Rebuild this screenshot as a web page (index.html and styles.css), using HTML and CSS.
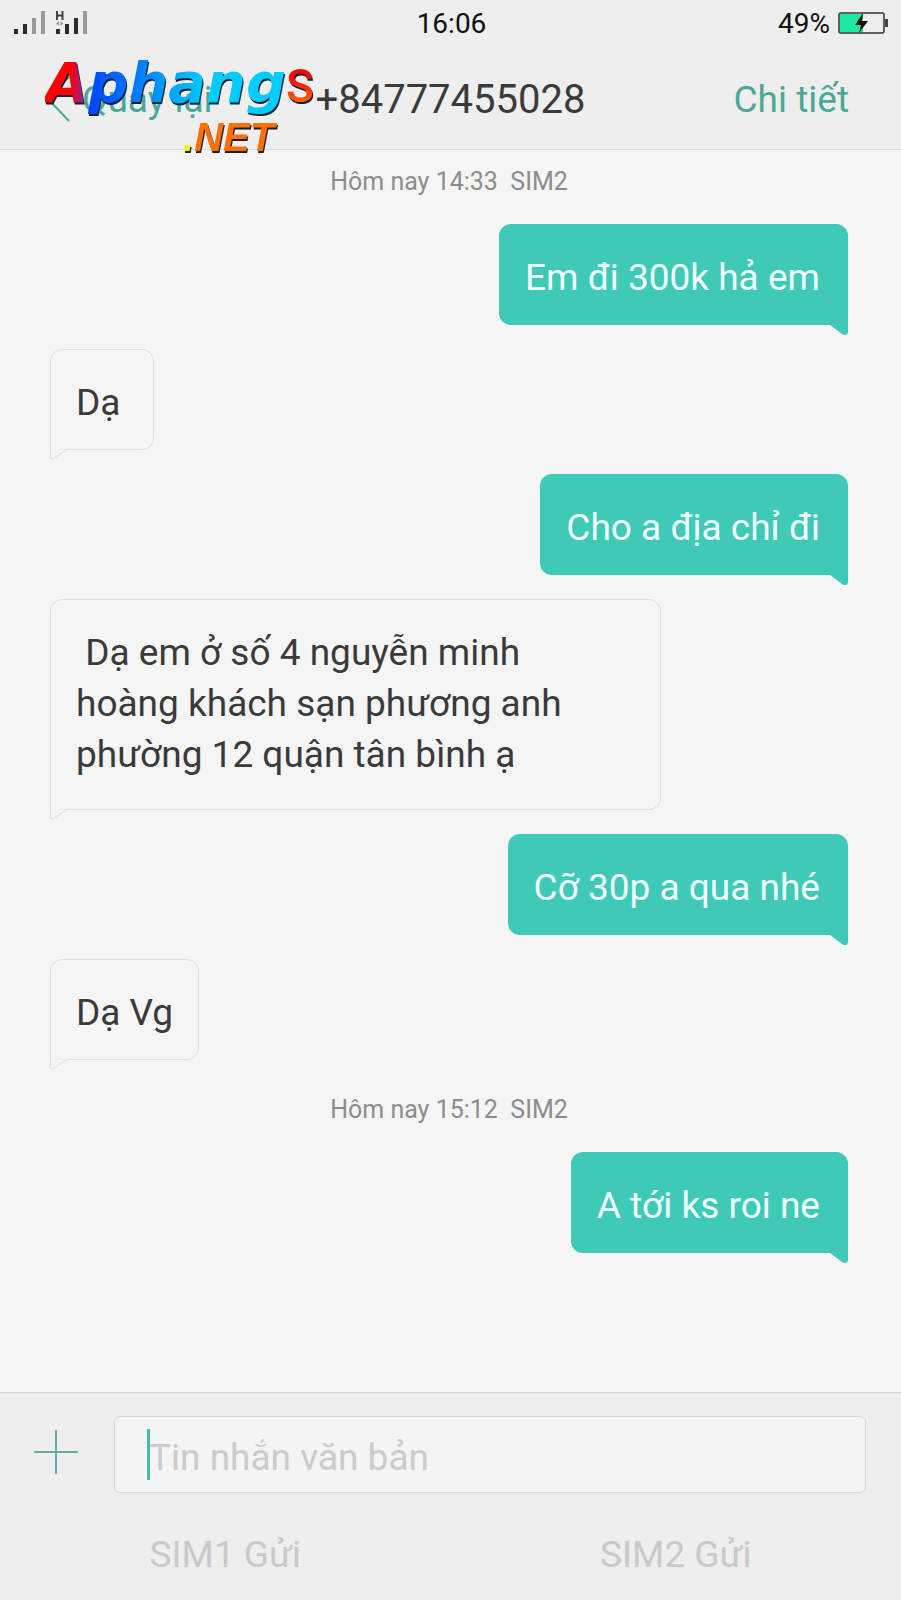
FILE: index.html
```html
<!DOCTYPE html>
<html lang="vi">
<head>
    <meta charset="UTF-8">
    <meta name="viewport" content="width=device-width, initial-scale=1.0">
    <title>+84777455028</title>
    <link rel="stylesheet" href="styles.css">
</head>
<body>
    <header class="header">
        <div class="status-bar">
            <svg class="signal" width="76" height="26" viewBox="0 0 76 26">
                <g fill="#2b2b2b">
                    <rect x="0" y="19" width="4" height="5"/>
                    <rect x="9" y="14" width="4" height="10"/>
                    <rect x="42" y="19" width="4" height="5"/>
                    <rect x="51" y="14" width="4" height="10"/>
                    <rect x="60" y="8" width="4" height="16"/>
                </g>
                <g fill="#999">
                    <rect x="18" y="8" width="4" height="16"/>
                    <rect x="27" y="1" width="4" height="23"/>
                    <rect x="69" y="1" width="4" height="23"/>
                    <path d="M45 11v5l-3-2.5zM46.500 11v5l3-2.500z"/>
                </g>
                <path d="M43 1v9M48.500 1v9M43 5.500h5.500" stroke="#444" stroke-width="2" fill="none"/>
            </svg>
            <span class="clock">16:06</span>
            <div class="battery">
                <span>49%</span>
                <svg width="51" height="22" viewBox="0 0 51 22">
                    <rect x="2" y="2" width="23" height="18" fill="#1de9a0"/>
                    <rect x="1" y="1" width="45" height="20" rx="2" fill="none" stroke="#333" stroke-width="1.500"/>
                    <rect x="47" y="7" width="3" height="8" fill="#444"/>
                    <path d="M25 1L17 13h6l-2 8 9-12h-6z" fill="#111"/>
                </svg>
            </div>
        </div>
        <nav class="nav">
            <a class="back" href="#">
                <svg width="26" height="46" viewBox="0 0 26 46">
                    <path d="M23 1L2 23l21 22" fill="none" stroke="#4aa897" stroke-width="2"/>
                </svg>
                Quay lại
            </a>
            <h1>+84777455028</h1>
            <a class="details" href="#">Chi tiết</a>
        </nav>
        <div class="logo">
            <div class="logo-name"><span class="l-a">A</span><span class="l-word">phang</span><span class="l-s">S</span></div>
            <div class="logo-net"><span class="l-dot">.</span>NET</div>
        </div>
    </header>

    <main class="chat">
        <p class="date">Hôm nay 14:33&nbsp; SIM2</p>
        <div class="bubble sent">Em đi 300k hả em</div>
        <div class="bubble received">Dạ<svg class="tail" width="18" height="11" viewBox="0 0 18 11"><path d="M.5 0V9q0 2 2 1L17 .5"/></svg></div>
        <div class="bubble sent">Cho a địa chỉ đi</div>
        <div class="bubble received long">&nbsp;Dạ em ở số 4 nguyễn minh<br>hoàng khách sạn phương anh phường 12 quận tân bình ạ<svg class="tail" width="18" height="11" viewBox="0 0 18 11"><path d="M.5 0V9q0 2 2 1L17 .5"/></svg></div>
        <div class="bubble sent">Cỡ 30p a qua nhé</div>
        <div class="bubble received">Dạ Vg<svg class="tail" width="18" height="11" viewBox="0 0 18 11"><path d="M.5 0V9q0 2 2 1L17 .5"/></svg></div>
        <p class="date">Hôm nay 15:12&nbsp; SIM2</p>
        <div class="bubble sent">A tới ks roi ne</div>
    </main>

    <form class="composer">
        <div class="compose-row">
            <button type="button" class="add" aria-label="Thêm">
                <svg width="44" height="44" viewBox="0 0 44 44">
                    <path d="M0 22h44M22 0v44" stroke="#5fae9f" stroke-width="2"/>
                </svg>
            </button>
            <div class="field">
                <input type="text" placeholder="Tin nhắn văn bản" aria-label="Tin nhắn văn bản">
                <span class="caret"></span>
            </div>
        </div>
        <div class="send-row">
            <button type="button">SIM1 Gửi</button>
            <button type="button">SIM2 Gửi</button>
        </div>
    </form>
</body>
</html>
```

FILE: styles.css
```css
* {
    box-sizing: border-box;
    margin: 0;
    padding: 0;
}

body {
    display: flex;
    flex-direction: column;
    min-height: 100vh;
    background-color: #f5f5f5;
    color: #3a3a3a;
    font-family: Roboto, sans-serif;
    font-size: 37px;
}

a {
    color: #4aa897;
    text-decoration: none;
}

button,
input {
    font: inherit;
    border: none;
    background: none;
}

/* Header */
.header {
    position: relative;
    background-color: #eee;
    border-bottom: 1px solid #dcdcdc;
}

.status-bar,
.nav {
    display: grid;
    grid-template-columns: 1fr auto 1fr;
    align-items: center;
}

.status-bar {
    height: 46px;
    padding: 0 12px 0 14px;
    font-size: 28px;
    color: #111;
}

.battery {
    display: flex;
    justify-content: flex-end;
    align-items: center;
    gap: 8px;
}

.nav {
    height: 103px;
    padding: 3px 52px 0 46px;
}

.nav h1 {
    padding-left: 6px;
    font-size: 40px;
    font-weight: 400;
}

.back {
    display: flex;
    align-items: center;
    gap: 10px;
}

.details {
    text-align: right;
}

/* Site logo laid over the header */
.logo {
    position: absolute;
    left: 45px;
    top: 50px;
    font-family: "DejaVu Sans", sans-serif;
    font-weight: 700;
    pointer-events: none;
    filter: drop-shadow(1px 2px 0 #123);
}

.logo-name {
    font-size: 56px;
    line-height: 66px;
    white-space: nowrap;
}

.logo-name span {
    background-clip: text;
    -webkit-background-clip: text;
    color: transparent;
}

.l-a,
.l-word {
    font-style: italic;
}

.l-a {
    background-image: linear-gradient(90deg, #f00 60%, #63c);
}

.l-word {
    background-image: linear-gradient(90deg, #04f, #0af 45%, #0cf 60%);
}

.l-s {
    font-family: Roboto, sans-serif;
    font-size: 46px;
    font-weight: 500;
    background-image: linear-gradient(#f00 30%, #f80);
}

.logo-net {
    padding-left: 138px;
    font-family: "Liberation Sans", sans-serif;
    font-size: 40px;
    font-style: italic;
    line-height: 36px;
    color: #ff7000;
}

.l-dot {
    color: #fe0;
}

/* Messages */
.chat {
    flex: 1;
    display: flex;
    flex-direction: column;
    gap: 24px;
    padding: 6px 53px 24px 50px;
}

.date {
    margin-top: 8px;
    font-size: 25px;
    line-height: 36px;
    text-align: center;
    color: #8c8c8c;
}

.bubble {
    position: relative;
    min-width: 104px;
    max-width: 611px;
    padding: 28px 28px 22px 26px;
    line-height: 51px;
    border-radius: 12px;
}

.sent {
    align-self: flex-end;
    background-color: #3fcab8;
    border-bottom-right-radius: 0;
    color: #f2fffc;
}

.sent::after {
    content: "";
    position: absolute;
    right: 0;
    top: 100%;
    width: 18px;
    height: 10px;
    background-color: #3fcab8;
    border-bottom-right-radius: 3px;
    clip-path: polygon(0 0, 100% 0, 100% 100%, 75% 100%);
}

.received {
    align-self: flex-start;
    padding: 27px 25px 21px 25px;
    border: 1px solid #dedede;
    border-bottom-left-radius: 0;
}

.long {
    padding-bottom: 29px;
}

.tail {
    position: absolute;
    left: -1px;
    top: 100%;
    fill: #f5f5f5;
    stroke: #dedede;
}

/* Composer */
.composer {
    background-color: #eee;
    border-top: 1px solid #d2d2d2;
}

.compose-row {
    display: flex;
    align-items: center;
    gap: 36px;
    padding: 23px 35px 0 34px;
}

.add {
    height: 50px;
}

.add svg {
    display: block;
    margin-bottom: 6px;
}

.field {
    position: relative;
    flex: 1;
}

.field input {
    display: block;
    width: 100%;
    height: 77px;
    padding: 5px 32px 0 34px;
    background-color: #f4f4f4;
    border: 1px solid #d6d6d6;
    border-radius: 6px;
    color: #3a3a3a;
    caret-color: #3fbfa8;
    outline: none;
}

.field input::placeholder {
    color: #cbcbcb;
}

.caret {
    position: absolute;
    left: 33px;
    top: 13px;
    width: 3px;
    height: 51px;
    background-color: #3fbfa8;
}

.send-row {
    display: grid;
    grid-template-columns: 1fr 1fr;
    padding-top: 30px;
}

.send-row button {
    height: 77px;
    padding-bottom: 14px;
    color: #c9c9c9;
}
```
